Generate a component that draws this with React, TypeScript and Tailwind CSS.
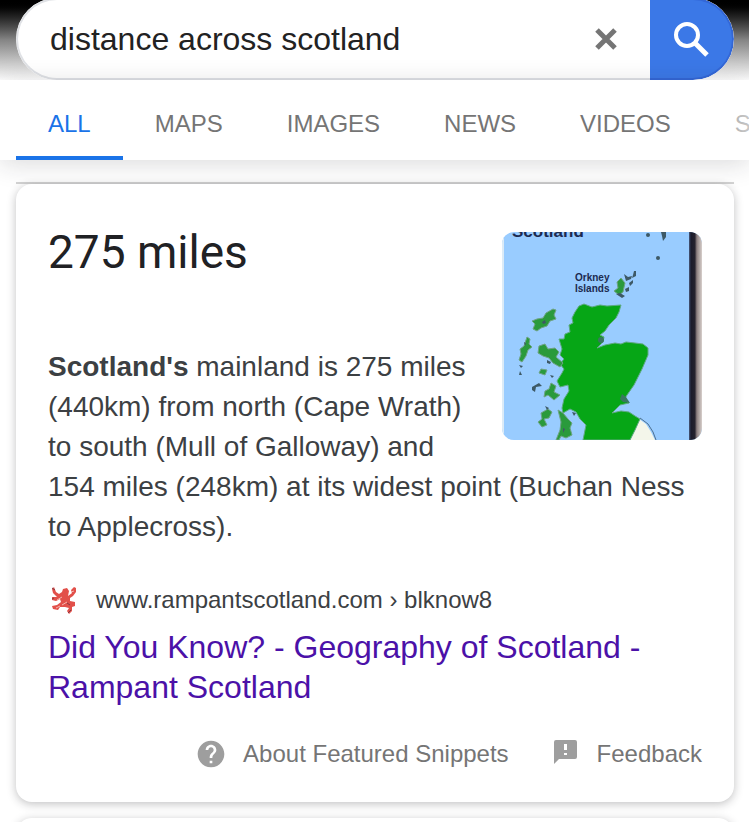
import { useState } from "react";

const tabs = ["ALL", "MAPS", "IMAGES", "NEWS", "VIDEOS", "SHOPPING"];

function SearchBar() {
  const [query, setQuery] = useState("distance across scotland");
  return (
    <header className="flex h-20 items-end overflow-hidden bg-linear-to-b from-black via-[#858585] to-white pr-[15px] pl-4">
      <form
        className="flex h-[82px] w-full shrink-0 overflow-hidden rounded-full bg-white"
        onSubmit={(e) => e.preventDefault()}
      >
        <div className="flex min-w-0 flex-1 items-center rounded-l-full border-2 border-r-0 border-[#dfe1e5] pr-6 pl-8">
          <input
            type="text"
            aria-label="Search"
            value={query}
            onChange={(e) => setQuery(e.target.value)}
            className="min-w-0 flex-1 bg-transparent text-[32px] leading-10 text-[#222] outline-none"
          />
          <button type="button" aria-label="Clear" onClick={() => setQuery("")} className="p-2">
            <svg width="24" height="24" viewBox="0 0 24 24" className="block" stroke="#757575" strokeWidth="5">
              <path d="M3 3 21 21M21 3 3 21" />
            </svg>
          </button>
        </div>
        <button
          type="submit"
          aria-label="Search"
          className="flex w-[84px] items-center justify-center rounded-r-full border-2 border-l-0 border-[#3367d6] bg-[#3b78e7]"
        >
          <svg width="36" height="36" viewBox="0 0 36 36" fill="none" stroke="#fff">
            <circle cx="14" cy="14" r="11" strokeWidth="4" />
            <path d="M22 22 34 34" strokeWidth="5" />
          </svg>
        </button>
      </form>
    </header>
  );
}

function Tabs() {
  return (
    <nav className="relative bg-white shadow-[0_4px_24px_rgba(32,33,36,0.16)]">
      <div className="flex h-20 overflow-hidden pl-4 text-2xl">
        {tabs.map((tab, i) => (
          <a
            key={tab}
            href="#"
            className={
              i === 0
                ? "flex shrink-0 items-center border-b-4 border-[#1a73e8] px-8 pt-3 text-[#1a73e8]"
                : "flex shrink-0 items-center border-b-4 border-transparent px-8 pt-3 text-[#757575]"
            }
          >
            {tab}
          </a>
        ))}
      </div>
      <div className="pointer-events-none absolute inset-y-0 right-0 w-8 bg-linear-to-l from-white/60 to-white/30" />
    </nav>
  );
}

function ScotlandMap() {
  return (
    <svg
      viewBox="0 0 200 208"
      role="img"
      aria-label="Map of Scotland"
      className="float-right mb-4 ml-8 h-[208px] w-[200px] rounded-xl"
    >
      <defs>
        <linearGradient id="edge" x1="0" x2="1" y1="0" y2="0">
          <stop offset="0" stopColor="#4a5c80" />
          <stop offset="0.15" stopColor="#1a1a2b" />
          <stop offset="0.45" stopColor="#25222e" />
          <stop offset="0.6" stopColor="#8c7f80" />
          <stop offset="1" stopColor="#d8d0cc" />
        </linearGradient>
      </defs>
      <rect width="200" height="208" fill="#99ccff" />
      <rect width="2" height="208" fill="#dcebf7" />
      <rect x="187" width="13" height="208" fill="url(#edge)" />
      <g fill="#1c2a50" fontWeight="700">
        <text x="10" y="5" fontSize="17">Scotland</text>
        <text x="73" y="49" fontSize="10">Orkney</text>
        <text x="73" y="60" fontSize="10">Islands</text>
      </g>
      <path d="M137 187 144 192 149 200 153 208H128Z" fill="#f4f6ea" />
      <path d="M138 186 146 192 151 200 154 208" fill="none" stroke="#4c6f90" />
      <path
        d="M77 74 82 72 90 75 98 73 105 74 119 73 117 80 114 86 107 93 103 99 98 103 102 105 101 110 95 116 103 113 113 111 119 112 124 110 133 111 141 112 146 116 146 123 140 137 132 153 125 163 122 168 127 171 118 173 110 181 119 179 127 180 133 184 138 187 133 198 128 208H81L84 193 78 187 74 180 68 177 61 181 60 176 62 167 67 159 66 153 58 155 55 149 60 141 62 137 58 132 62 127 58 123 60 117 57 107 62 107 63 102 68 100 67 93 71 91 70 86 73 80Z"
        fill="#06a616"
        stroke="#5fa982"
        strokeWidth="1"
      />
      <g fill="#2a9a3c" stroke="#6fa386" strokeWidth="1">
        <path d="M51 77 54 78 52 83 54 87 48 89 45 94 39 96 35 99 31 97 33 92 30 89 35 87 41 86 44 81Z" />
        <path d="M25 105 28 107 27 112 30 115 26 118 24 124 20 130 17 128 19 122 18 117 22 114Z" />
        <path d="M37 114 43 112 46 117 53 116 57 120 54 125 61 131 58 135 51 131 47 126 41 124 36 121Z" />
        <path d="M39 137 45 138 43 143 37 141Z" />
        <path d="M49 151 54 154 52 160 58 163 52 168 46 163 42 165 43 159 47 157Z" />
        <path d="M39 181 46 177 50 180 47 186 42 187 45 193 40 195 36 190 40 187Z" />
        <path d="M56 178 61 181 66 187 70 191 68 196 70 203 64 206 59 204 57 208H54L58 198 59 190Z" />
        <path d="M115 50 119 46 123 51 121 60 117 63 112 59 116 56Z" />
      </g>
      <g fill="#3d5966">
        <path d="M122 42 126 45 130 44 129 47 124 49ZM132 39h2v5l-4 2 1-3ZM127 51l4-3v3l-3 3ZM123 57l4-2v4l-3 1ZM114 62l4-1 5 3-3 2Z" />
        <path d="M17 133l4 1-2 2ZM18 139l2 4h-3ZM30 155l7-4 3 3-6 1-1 5-3-2ZM43 174l4 2-2 2Z" />
        <path d="M40 90l3-2 1 3-3 1ZM45 128l4 2-1 2-3-1ZM48 143l4 1-2 2ZM70 180l4 1-2 3ZM61 196l2 1-2 4ZM22 110l2 1-1 3Z" />
        <circle cx="156" cy="26" r="2" />
        <circle cx="146" cy="3" r="2" />
        <path d="M159 0h5v5l-3 4-1-5Z" />
      </g>
      <g fill="#39785f">
        <circle cx="99" cy="108" r="3" />
        <path d="M120 162l4 3 4 6-7-1-3-3Z" />
      </g>
    </svg>
  );
}

function LionIcon() {
  return (
    <svg width="32" height="32" viewBox="0 0 32 32" aria-hidden="true" className="shrink-0">
      <path
        d="M6 3 8 8 11 10 14 8 15 5 19 4 21 7 20 12 24 9 23 6 26 3 28 4 28 8 25 12 22 14 22 17 27 18 27 22 24 23 24 27 21 30 19 27 21 24 17 23 12 23 10 26 5 25 4 22 9 21 13 18 12 15 8 17 4 16 4 13 9 13 5 9 4 5Z"
        fill="#e2504a"
      />
      <path d="M9 16 14 13M14 21 19 18M23 8 26 7M8 24 12 22" stroke="#f5b5ae" />
      <path d="M4 4 7 6M4 15 6 14M19 19 22 21M20 29 23 26" stroke="#833a43" />
    </svg>
  );
}

function SnippetCard() {
  return (
    <article className="rounded-2xl bg-white px-8 pt-12 pb-8 shadow-[0_2px_10px_rgba(32,33,36,0.28)]">
      <ScotlandMap />
      <h1 className="mb-[75px] font-[Roboto,sans-serif] text-[46px] leading-10 text-[#202124]">275 miles</h1>
      <p className="text-[28px] leading-10 text-[#3c4043]">
        <b>Scotland's</b> mainland is 275 miles (440km) from north (Cape Wrath) to south (Mull of Galloway) and
        154&nbsp;miles (248km) at its widest point (Buchan Ness to Applecross).
      </p>
      <a href="#" className="mt-9 block">
        <span className="flex items-center gap-4 text-2xl leading-[34px] text-[#3c4043]">
          <LionIcon />
          www.rampantscotland.com › blknow8
        </span>
        <h2 className="mt-[10px] text-[32px] leading-10 text-[#4b11a8]">
          Did You Know? - Geography of Scotland - Rampant Scotland
        </h2>
      </a>
      <footer className="mt-[31px] flex justify-end gap-11 text-2xl leading-8 text-[#757575]">
        <a href="#" className="flex items-center gap-4">
          <svg width="32" height="32" viewBox="0 0 24 24" fill="#9e9e9e" aria-hidden="true">
            <path d="M12 2C6.48 2 2 6.48 2 12s4.48 10 10 10 10-4.48 10-10S17.52 2 12 2zm1 17h-2v-2h2v2zm2.07-7.75-.9.92C13.45 12.9 13 13.5 13 15h-2v-.5c0-1.1.45-2.1 1.17-2.83l1.24-1.26c.37-.36.59-.86.59-1.41 0-1.1-.9-2-2-2s-2 .9-2 2H8c0-2.21 1.79-4 4-4s4 1.79 4 4c0 .88-.36 1.68-.93 2.25z" />
          </svg>
          About Featured Snippets
        </a>
        <a href="#" className="flex items-center gap-4">
          <svg width="28" height="28" viewBox="0 0 28 28" fill="#9e9e9e" aria-hidden="true">
            <path
              fillRule="evenodd"
              d="M3 0H22Q24 0 24 2V17Q24 19 22 19H6L1 24V2Q1 0 3 0ZM11 4V10H14V4ZM11 13V15H14V13Z"
            />
          </svg>
          Feedback
        </a>
      </footer>
    </article>
  );
}

export default function App() {
  return (
    <div className="h-screen overflow-hidden bg-white font-['Liberation_Sans',Arial,sans-serif]">
      <SearchBar />
      <Tabs />
      <main className="relative flex flex-col gap-4 pt-[22px] pr-[15px] pl-4">
        <div className="border-t-2 border-[#d2d2d2]">
          <SnippetCard />
        </div>
        <section
          aria-label="More results"
          className="h-40 rounded-2xl bg-white shadow-[0_2px_10px_rgba(32,33,36,0.28)]"
        />
      </main>
    </div>
  );
}
